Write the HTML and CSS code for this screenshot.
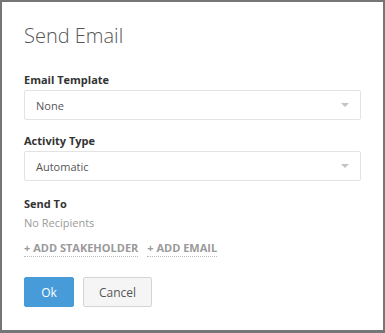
FILE: index.html
```html
<!DOCTYPE html>
<html lang="en">
    <head>
        <meta charset="UTF-8">
        <title>Send Email</title>
        <link rel="stylesheet" href="styles.css">
    </head>
    <body>
        <!-- Fenêtre modale -->
        <div class="modal">
            <h2 class="modal-title">Send Email</h2>

            <label class="field-label">Email Template</label>
            <div class="select-box">
                <span>None</span>
                <span class="caret"></span>
            </div>

            <label class="field-label">Activity Type</label>
            <div class="select-box">
                <span>Automatic</span>
                <span class="caret"></span>
            </div>

            <label class="field-label send-to">Send To</label>
            <div class="no-recipients">No Recipients</div>
            <div class="add-links">
                <span class="add-link">+ Add Stakeholder</span>
                <span class="add-link">+ Add Email</span>
            </div>

            <div class="actions">
                <button class="btn btn-ok">Ok</button>
                <button class="btn btn-cancel">Cancel</button>
            </div>
        </div>
    </body>
</html>
```

FILE: styles.css
```css
/* Style global */
body, html {
    margin: 0;
    padding: 0;
    height: 100%;
    overflow: hidden;
}

body {
    background-color: #767676;
    font-family: 'Open Sans', 'Liberation Sans', sans-serif;
    padding: 2px 2px 3px 2px;
    box-sizing: border-box;
}

/* Fenêtre modale */
.modal {
    background-color: #ffffff;
    height: 100%;
    padding: 20px 22px 0 22px;
    box-sizing: border-box;
}

.modal-title {
    margin: 0 0 21px 0;
    font-size: 20px;
    line-height: 28px;
    font-weight: 300;
    color: #555555;
}

.field-label {
    display: block;
    font-size: 11px;
    line-height: 18px;
    font-weight: 700;
    color: #333333;
    margin-bottom: 1px;
}

/* Listes déroulantes */
.select-box {
    display: flex;
    align-items: center;
    justify-content: space-between;
    height: 30px;
    padding: 0 11px 0 11px;
    border: 1px solid #e3e3e3;
    border-radius: 2px;
    box-sizing: border-box;
    font-size: 11px;
    color: #555555;
    margin-bottom: 12px;
}

.caret {
    width: 0;
    height: 0;
    border-left: 4px solid transparent;
    border-right: 4px solid transparent;
    border-top: 4px solid #c4c4c4;
}

.send-to {
    margin-top: 14px;
    margin-bottom: 1px;
}

.no-recipients {
    font-size: 11px;
    line-height: 18px;
    color: #9a9a9a;
}

/* Liens d'ajout */
.add-links {
    display: flex;
    gap: 9px;
    margin-top: 7px;
}

.add-link {
    font-size: 11px;
    line-height: 17px;
    font-weight: 700;
    color: #9a9a9a;
    text-transform: uppercase;
    border-bottom: 1px dotted #bbbbbb;
    cursor: pointer;
}

/* Boutons */
.actions {
    display: flex;
    gap: 9px;
    margin-top: 20px;
}

.btn {
    height: 30px;
    border-radius: 2px;
    font-family: 'Open Sans', 'Liberation Sans', sans-serif;
    font-size: 12px;
    cursor: pointer;
}

.btn-ok {
    width: 50px;
    background-color: #469bd8;
    border: 1px solid #469bd8;
    color: #ffffff;
}

.btn-cancel {
    width: 69px;
    background-color: #f5f5f5;
    border: 1px solid #d4d4d4;
    color: #555555;
}
```
